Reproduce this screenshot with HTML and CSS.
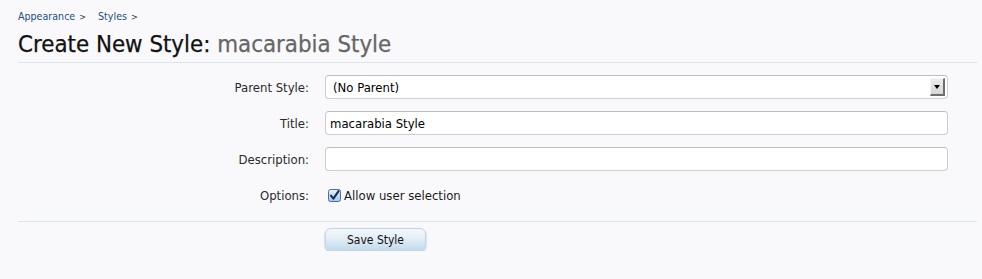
FILE: index.html
```html
<!DOCTYPE html>
<html lang="en">
<head>
<meta charset="utf-8">
<title>Create New Style</title>
<link rel="stylesheet" href="styles.css">
</head>
<body>
<div class="page">
  <nav class="breadcrumb">
    <a href="#" class="crumb">Appearance</a><span class="sep">&gt;</span>
    <a href="#" class="crumb">Styles</a><span class="sep">&gt;</span>
  </nav>
  <h1 class="title">Create New Style: <span class="title-sub">macarabia Style</span></h1>

  <form class="form">
    <div class="row">
      <label class="label">Parent Style:</label>
      <div class="field select">
        <span class="select-text">(No Parent)</span>
        <span class="select-btn"><span class="select-arrow"></span></span>
      </div>
    </div>
    <div class="row">
      <label class="label">Title:</label>
      <input class="field input" type="text" value="macarabia Style">
    </div>
    <div class="row">
      <label class="label">Description:</label>
      <input class="field input" type="text" value="">
    </div>
    <div class="row">
      <span class="label">Options:</span>
      <label class="check">
        <svg class="check-box" width="13" height="13" viewBox="0 0 13 13">
          <defs>
            <linearGradient id="cb" x1="0" y1="0" x2="0" y2="1">
              <stop offset="0" stop-color="#e8f1fb"/>
              <stop offset="1" stop-color="#a9c6e8"/>
            </linearGradient>
          </defs>
          <rect x="0.5" y="0.5" width="12" height="12" rx="2" fill="url(#cb)" stroke="#4f6f99"/>
          <path d="M3 6.6 L5.4 9.6 L10.6 2.2" fill="none" stroke="#10305e" stroke-width="2.1" stroke-linecap="round" stroke-linejoin="round"/>
        </svg>
        <span class="check-text">Allow user selection</span>
      </label>
    </div>
    <div class="actions">
      <span class="label"></span>
      <button type="button" class="button">Save Style</button>
    </div>
  </form>
</div>
</body>
</html>
```

FILE: styles.css
```css
html, body {
  margin: 0;
  padding: 0;
  background: #f9f9fb;
}

body {
  font-family: "DejaVu Sans Condensed", "DejaVu Sans", sans-serif;
  font-stretch: condensed;
  color: #222;
}

.page {
  padding: 8px 5px 0 18px;
}

.breadcrumb {
  font-size: 10.6px;
  line-height: 16px;
  height: 16px;
}

.crumb {
  color: #23507e;
  text-decoration: none;
}

.sep {
  color: #333;
  font-size: 9px;
  margin: 0 9px 0 4px;
}

.title {
  margin: 6px 0 0 0;
  padding: 0 0 4px 0;
  font-size: 23.8px;
  line-height: 28px;
  font-weight: normal;
  color: #111;
  border-bottom: 1px solid #d9e6ee;
  -webkit-text-stroke: 0.25px currentColor;
}

.title-sub {
  color: #666;
}

.form {
  display: flex;
  flex-direction: column;
  margin: 0;
  padding-top: 12px;
}

.row {
  display: flex;
  align-items: center;
  height: 24px;
  margin-bottom: 12px;
}

.label {
  width: 291px;
  flex: none;
  text-align: right;
  margin-right: 16px;
  font-size: 13px;
  color: #2a2a2a;
}

.field {
  box-sizing: border-box;
  width: 623px;
  height: 24px;
  border: 1px solid #cdcdcd;
  border-top-color: #bdbdbd;
  border-radius: 4px;
  background: #fff;
  font-family: inherit;
  font-stretch: condensed;
  font-size: 13px;
  color: #000;
}

.input {
  padding: 0 4px;
  outline: none;
}

.select {
  display: flex;
  align-items: center;
  padding: 0 2px 0 7px;
}

.select-text {
  flex: 1;
}

.select-btn {
  box-sizing: border-box;
  width: 15px;
  height: 18px;
  background: linear-gradient(#ececec, #d6d6d6);
  border-right: 2px solid #6e6e6e;
  border-bottom: 2px solid #6e6e6e;
  border-top: 1px solid #f4f4f4;
  border-left: 1px solid #f4f4f4;
  display: flex;
  align-items: center;
  justify-content: center;
}

.select-arrow {
  width: 0;
  height: 0;
  border-left: 3.5px solid transparent;
  border-right: 3.5px solid transparent;
  border-top: 4px solid #000;
}

.check {
  display: flex;
  align-items: center;
  font-size: 13px;
  color: #1a1a1a;
  padding-left: 3px;
}

.check-box {
  display: block;
  margin-right: 3px;
}

.actions {
  display: flex;
  align-items: center;
  border-top: 1px solid #d9e6ee;
  margin-top: 2px;
  padding-top: 6px;
}

.button {
  box-sizing: border-box;
  width: 101px;
  height: 23px;
  border: 1px solid #c3d6e6;
  border-radius: 6px;
  background: linear-gradient(#f3f8fc 0%, #e3eef7 45%, #c3daec 100%);
  box-shadow: 0 1px 2px rgba(0, 0, 0, 0.3);
  font-family: inherit;
  font-stretch: condensed;
  font-size: 12px;
  color: #111;
  padding: 0;
  cursor: pointer;
}
```
